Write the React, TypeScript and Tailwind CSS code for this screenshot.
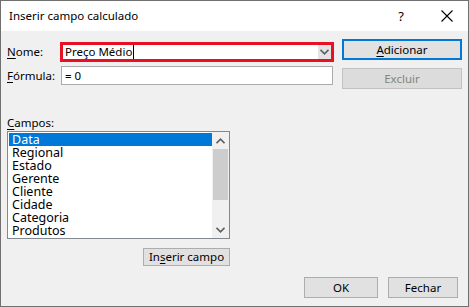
import React from "react";

const Chevron = ({ dir, className }: { dir: "up" | "down"; className?: string }) => (
  <svg width="9" height="6" viewBox="0 0 9 6" className={className}>
    {dir === "down" ? (
      <path d="M0.5 0.8 L4.5 4.8 L8.5 0.8" fill="none" stroke="currentColor" strokeWidth="1.6" />
    ) : (
      <path d="M0.5 5.2 L4.5 1.2 L8.5 5.2" fill="none" stroke="currentColor" strokeWidth="1.6" />
    )}
  </svg>
);

const items = ["Data", "Regional", "Estado", "Gerente", "Cliente", "Cidade", "Categoria", "Produtos"];

export default function App() {
  return (
    <div className="w-[469px] h-[307px] border border-[#707070] flex flex-col bg-[#f0f0f0] text-[11.5px] text-black font-['Noto_Sans',sans-serif] leading-[16px] overflow-hidden">
      {/* Title bar */}
      <div className="h-[30px] bg-white flex items-center shrink-0">
        <div className="pl-[8px] text-[11.5px] flex-1">Inserir campo calculado</div>
        <div className="w-[46px] flex justify-center text-[13px] mr-[-2px]">?</div>
        <div className="w-[46px] flex justify-center ml-[2px] mr-[-2px]">
          <svg width="12" height="12" viewBox="0 0 12 12">
            <path d="M0.5 0.5 L11.5 11.5 M11.5 0.5 L0.5 11.5" stroke="#000" strokeWidth="1.1" />
          </svg>
        </div>
      </div>

      {/* Body */}
      <div className="flex-1 flex flex-col pl-[6px]">
        <div className="flex">
          <div className="flex flex-col w-[327px] pt-[11px]">
            <div className="flex items-center h-[20px]">
              <div className="w-[53px]">
                <span className="underline underline-offset-2">N</span>ome:
              </div>
              <div className="w-[274px] h-[20px] border-[3px] border-[#e81123] bg-white flex items-center">
                <div className="flex-1 pl-[2px] flex items-center">
                  Preço Médio<span className="inline-block w-[1px] h-[14px] bg-black ml-[1px]" />
                </div>
                <div className="w-[13px] h-full bg-[#e3e3e3] flex items-center justify-center text-[#606060]">
                  <Chevron dir="down" />
                </div>
              </div>
            </div>
            <div className="flex items-center mt-[4px]">
              <div className="w-[54px]">
                <span className="underline underline-offset-2">F</span>órmula:
              </div>
              <div className="w-[272px] h-[19px] border border-[#ababab] bg-white flex items-center pl-[3px]">
                = 0
              </div>
            </div>
          </div>
          <div className="ml-[8px] flex flex-col pt-[8px] gap-[8px]">
            <div className="w-[120px] h-[21px] border-2 border-[#0078d7] bg-[#e1e1e1] flex items-center justify-center">
              <span>
                <span className="underline underline-offset-2">A</span>dicionar
              </span>
            </div>
            <div className="w-[120px] h-[21px] border border-[#c2c2c2] bg-[#dcdcdc] flex items-center justify-center text-[#838383]">
              Excluir
            </div>
          </div>
        </div>

        <div className="w-[223px] flex flex-col items-stretch mt-[26px]">
          <div className="h-[16px]">
            <span className="underline underline-offset-2">C</span>ampos:
          </div>
          <div className="h-[108px] border border-[#828790] bg-white flex">
            <div className="flex-1 flex flex-col py-[1px] pl-[1px]">
              {items.map((it, i) => (
                <div
                  key={it}
                  className={
                    "h-[13px] leading-[13px] text-[12.5px] pl-[3px] " +
                    (i === 0 ? "bg-[#0078d7] text-white" : "")
                  }
                >
                  {it}
                </div>
              ))}
            </div>
            <div className="w-[17px] flex flex-col bg-[#f0f0f0]">
              <div className="h-[17px] flex items-center justify-center text-[#606060]">
                <Chevron dir="up" />
              </div>
              <div className="flex-1 flex flex-col">
                <div className="h-[51px] mx-[1px] bg-[#cdcdcd]" />
              </div>
              <div className="h-[17px] flex items-center justify-center text-[#606060]">
                <Chevron dir="down" />
              </div>
            </div>
          </div>
          <div className="flex justify-end mt-[9px]">
            <div className="w-[87px] h-[18px] border border-[#adadad] bg-[#e1e1e1] flex items-center justify-center">
              <span>
                In<span className="underline underline-offset-2">s</span>erir campo
              </span>
            </div>
          </div>
        </div>

        <div className="flex justify-end pr-[10px] mt-[11px] gap-[10px]">
          <div className="w-[74px] h-[21px] border border-[#adadad] bg-[#e1e1e1] flex items-center justify-center">
            OK
          </div>
          <div className="w-[70px] h-[21px] border border-[#adadad] bg-[#e1e1e1] flex items-center justify-center">
            Fechar
          </div>
        </div>
      </div>
    </div>
  );
}
